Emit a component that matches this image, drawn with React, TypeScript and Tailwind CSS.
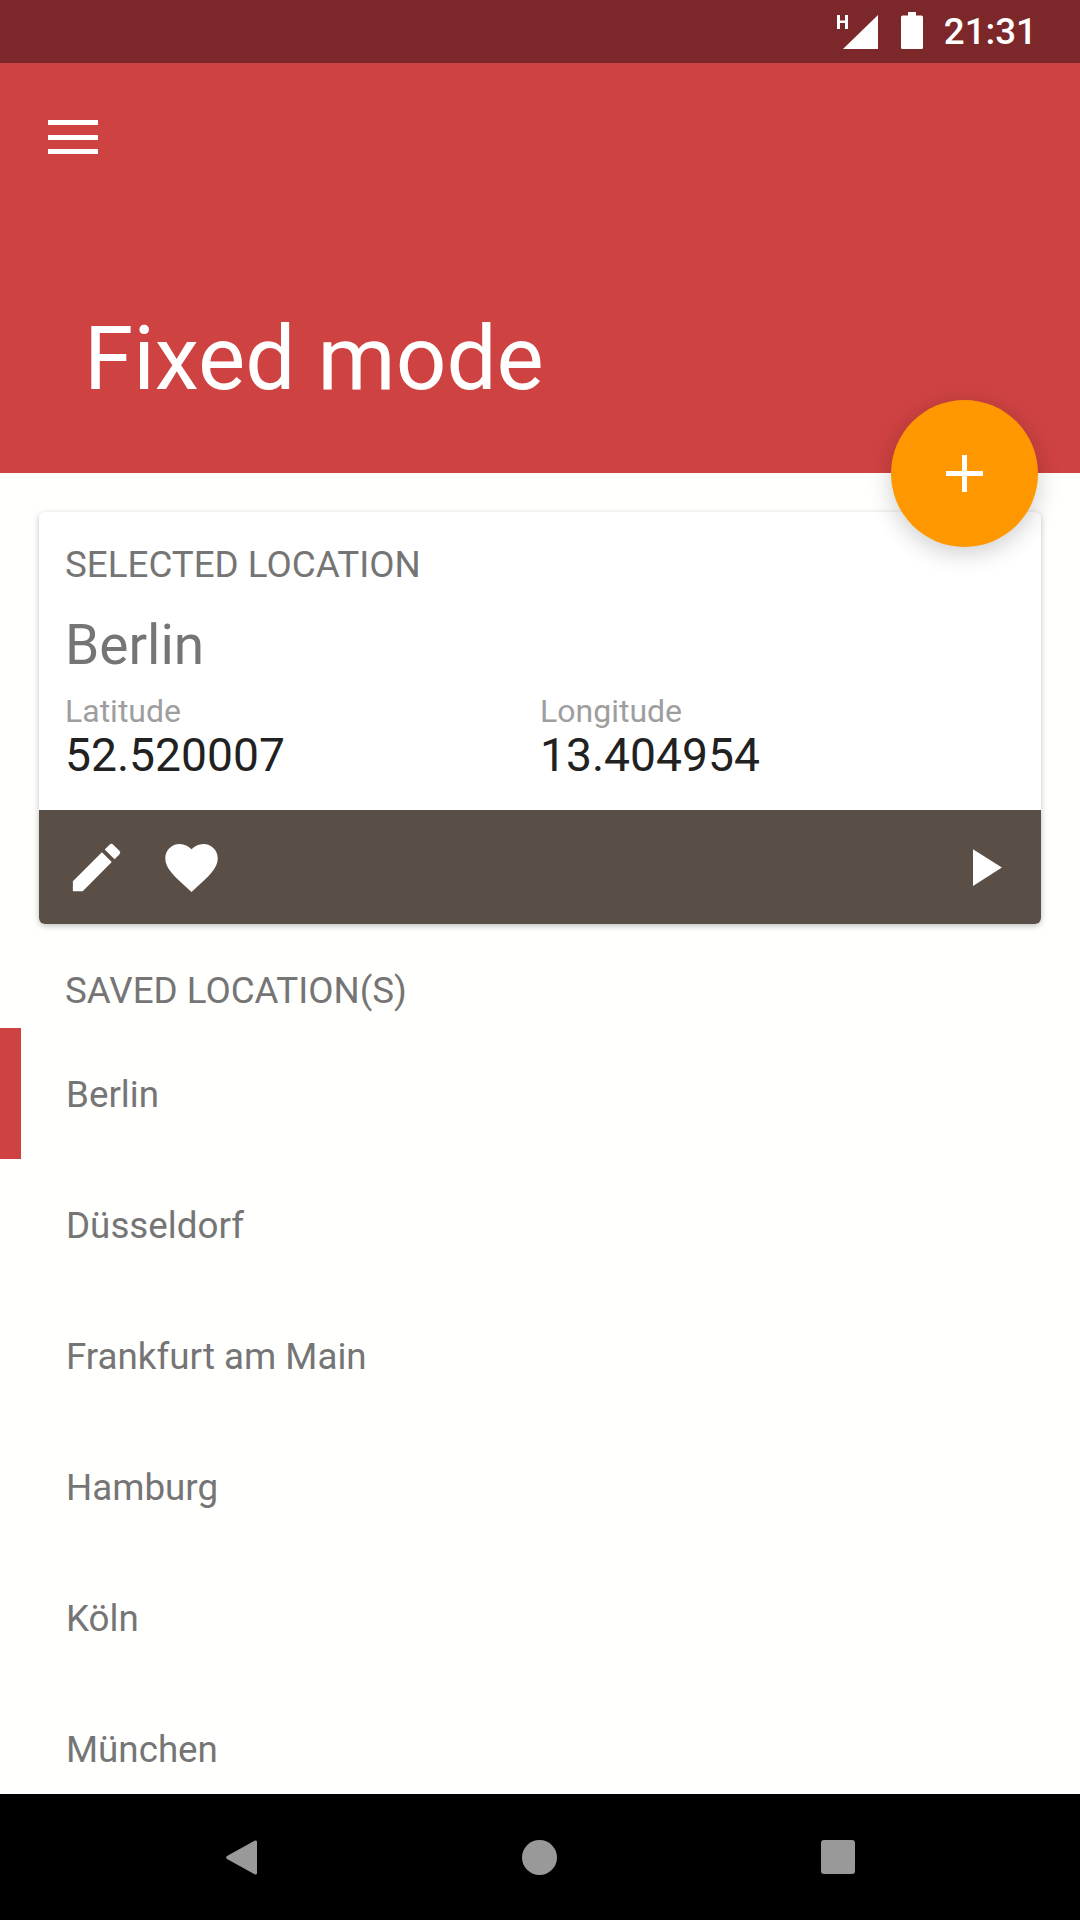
import React from 'react';

const cities = ['Berlin', 'Düsseldorf', 'Frankfurt am Main', 'Hamburg', 'Köln', 'München'];

const Icon = ({ d, className }: { d: string; className?: string }) => (
  <svg viewBox="0 0 24 24" className={className} fill="currentColor">
    <path d={d} />
  </svg>
);

export default function App() {
  return (
    <div className="relative flex h-[1920px] w-[1080px] flex-col overflow-hidden bg-[#fffffd] font-['Roboto',sans-serif]">
      {/* Status bar */}
      <div className="flex h-[63px] shrink-0 items-center justify-end bg-[#7c2729] pr-[43px] text-white">
        <svg viewBox="0 0 41 35" className="mt-[1px] h-[35px] w-[41px]" fill="currentColor">
          <path d="M6 34 L41 0 V34 Z" strokeLinejoin="round" />
          <path d="M0 0h3v5.500h5V0h3v14H8V8H3v6H0z" />
        </svg>
        <svg viewBox="0 0 22 37" className="mb-[2px] ml-[23px] h-[37px] w-[22px]" fill="currentColor">
          <path d="M7 0h8v3.500h5.500a1.500 1.500 0 0 1 1.500 1.500v30.500a1.500 1.500 0 0 1-1.500 1.500h-19A1.500 1.500 0 0 1 0 35.500V5a1.500 1.500 0 0 1 1.500-1.500H7z" />
        </svg>
        <span className="ml-[21px] mt-[2px] text-[36.75px] leading-none font-medium">21:31</span>
      </div>

      {/* Header */}
      <header className="h-[410px] shrink-0 bg-[#cf4242] text-white">
        <div className="ml-[48px] mt-[57px] flex h-[34px] w-[50px] flex-col justify-between">
          <div className="h-[5px] bg-white" />
          <div className="h-[5px] bg-white" />
          <div className="h-[5px] bg-white" />
        </div>
        <h1 className="ml-[84px] mt-[155px] text-[89px] leading-[100px]">Fixed mode</h1>
      </header>

      {/* FAB */}
      <button className="absolute left-[891px] top-[400px] z-10 flex h-[147px] w-[147px] items-center justify-center rounded-full bg-[#ff9800] text-white shadow-[0_6px_24px_rgba(0,0,0,0.2)]">
        <svg viewBox="0 0 37 37" className="h-[37px] w-[37px]" fill="currentColor">
          <path d="M16 0h5v16h16v5H21v16h-5V21H0v-5h16z" />
        </svg>
      </button>

      <main className="min-h-0 flex-1 overflow-hidden">
        {/* Selected location card */}
        <section className="mx-[39px] mt-[39px] overflow-hidden rounded-[6px] bg-white shadow-[0_2px_6px_rgba(0,0,0,0.25)]">
          <div className="h-[298px] px-[26px]">
            <p className="pt-[31px] text-[36.75px] leading-[44px] text-[#757575]">SELECTED LOCATION</p>
            <p className="mt-[26px] text-[55px] leading-[64px] text-[#757575]">Berlin</p>
            <div className="mt-[16px] grid grid-cols-2">
              <div>
                <p className="text-[32px] leading-[36px] text-[#9e9e9e]">Latitude</p>
                <p className="text-[46.2px] leading-[52px] text-[#212121]">52.520007</p>
              </div>
              <div>
                <p className="text-[32px] leading-[36px] text-[#9e9e9e]">Longitude</p>
                <p className="text-[46.2px] leading-[52px] text-[#212121]">13.404954</p>
              </div>
            </div>
          </div>
          <div className="flex h-[114px] items-center bg-[#5a4f47] px-[26px] text-white">
            <Icon
              className="h-[63px] w-[63px]"
              d="M3 17.250V21h3.750L17.810 9.940l-3.750-3.750L3 17.250zM20.710 7.040a1 1 0 0 0 0-1.410l-2.340-2.340a1 1 0 0 0-1.410 0l-1.830 1.830 3.750 3.750 1.830-1.830z"
            />
            <Icon
              className="ml-[32px] h-[63px] w-[63px]"
              d="M12 21.350l-1.450-1.320C5.400 15.360 2 12.280 2 8.500 2 5.420 4.420 3 7.500 3c1.740 0 3.410.810 4.500 2.090C13.090 3.810 14.760 3 16.500 3 19.580 3 22 5.420 22 8.500c0 3.780-3.400 6.860-8.550 11.540L12 21.350z"
            />
            <Icon className="ml-auto h-[63px] w-[63px]" d="M8 5v14l11-7z" />
          </div>
        </section>

        {/* Saved locations */}
        <p className="mt-[45px] pl-[65px] text-[36.75px] leading-[44px] text-[#757575]">SAVED LOCATION(S)</p>
        <ul className="mt-[15px]">
          {cities.map((city, i) => (
            <li key={city} className="relative flex h-[131px] items-center pl-[66px] pt-[3px] text-[36.75px] text-[#757575]">
              {i === 0 && <div className="absolute inset-y-0 left-0 w-[21px] bg-[#cf4242]" />}
              {city}
            </li>
          ))}
        </ul>
      </main>

      {/* Navigation bar */}
      <nav className="relative flex h-[126px] shrink-0 items-center bg-black pl-[226px] text-[#999999]">
        <svg viewBox="0 0 31 35" className="h-[35px] w-[31px]" fill="currentColor">
          <path d="M29 0.500a1.500 1.500 0 0 1 2 1.500v31a1.500 1.500 0 0 1-2 1.500L1 19a2 2 0 0 1 0-3z" />
        </svg>
        <div className="ml-[265px] h-[35px] w-[35px] rounded-full bg-[#999999]" />
        <div className="ml-[264px] h-[34px] w-[34px] rounded-[3px] bg-[#999999]" />
      </nav>
    </div>
  );
}
